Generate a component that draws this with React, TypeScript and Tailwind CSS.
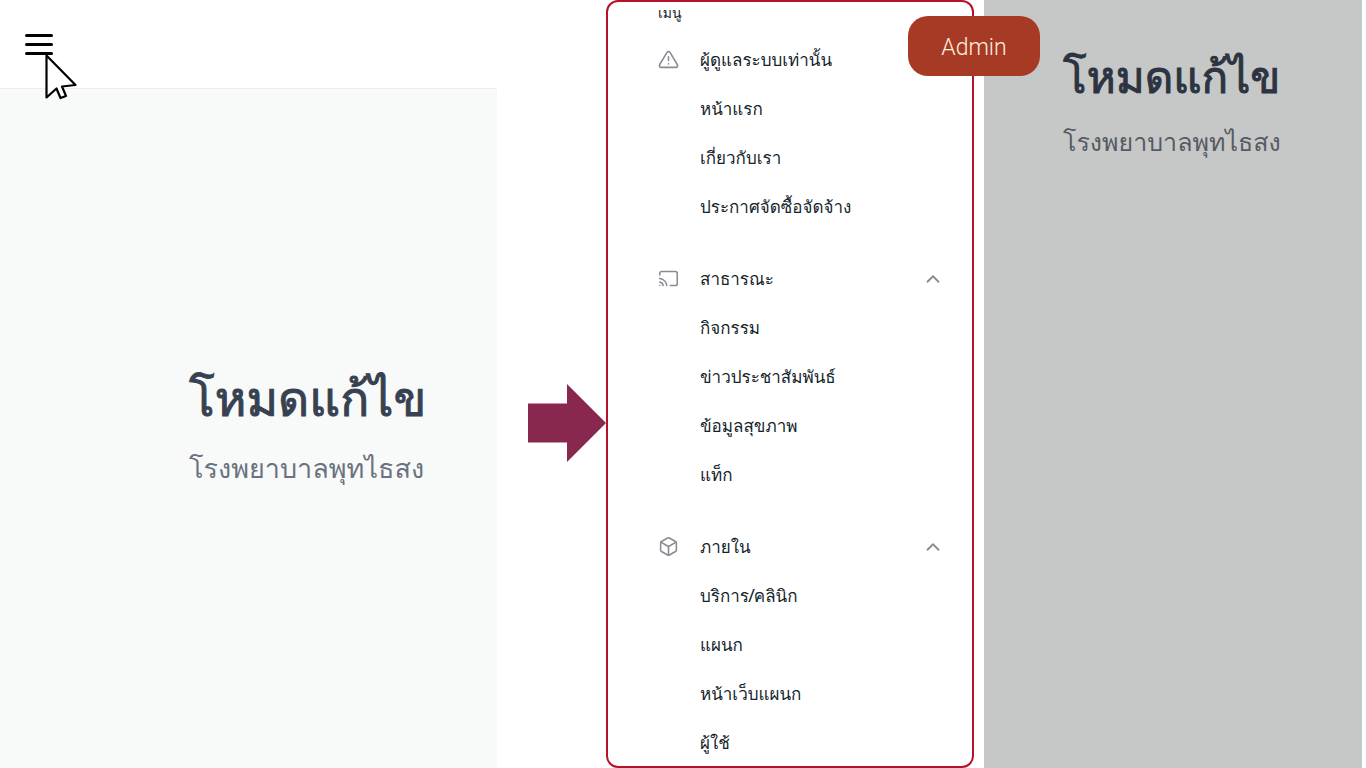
import { FiAlertTriangle, FiBox, FiCast, FiChevronUp } from "react-icons/fi";
import type { IconType } from "react-icons";

type Group = { title: string; icon: IconType; collapsible: boolean; items: string[] };

const groups: Group[] = [
  {
    title: "ผู้ดูแลระบบเท่านั้น",
    icon: FiAlertTriangle,
    collapsible: false,
    items: ["หน้าแรก", "เกี่ยวกับเรา", "ประกาศจัดซื้อจัดจ้าง"],
  },
  {
    title: "สาธารณะ",
    icon: FiCast,
    collapsible: true,
    items: ["กิจกรรม", "ข่าวประชาสัมพันธ์", "ข้อมูลสุขภาพ", "แท็ก"],
  },
  {
    title: "ภายใน",
    icon: FiBox,
    collapsible: true,
    items: ["บริการ/คลินิก", "แผนก", "หน้าเว็บแผนก", "ผู้ใช้"],
  },
];

function MenuGroup({ title, icon: Icon, collapsible, items }: Group) {
  const heading = (
    <>
      <Icon size={21} strokeWidth={1.8} className="shrink-0 text-[#8b8b95]" />
      <span className="grow text-left">{title}</span>
      {collapsible && <FiChevronUp size={22} strokeWidth={2} className="text-[#8b8b95]" />}
    </>
  );
  return (
    <section>
      {collapsible ? (
        <button type="button" aria-expanded="true" className="flex h-[49px] w-full items-center gap-[21px]">
          {heading}
        </button>
      ) : (
        <h3 className="flex h-[49px] items-center gap-[21px]">{heading}</h3>
      )}
      <ul className="pl-[42px]">
        {items.map((item) => (
          <li key={item}>
            <a href="#" className="flex h-[49px] items-center">
              {item}
            </a>
          </li>
        ))}
      </ul>
    </section>
  );
}

function Pointer() {
  return (
    <svg viewBox="0 0 34 48" className="absolute top-[53px] left-11 h-12 w-[34px]" aria-hidden="true">
      <path
        d="M2.5 2.5V44.5L12.5 35.5L16.5 45L22 43L18 33.5L31.5 32Z"
        fill="#fff"
        stroke="#000"
        strokeWidth="2.2"
        strokeLinejoin="round"
      />
    </svg>
  );
}

export default function App() {
  return (
    <main className="flex h-screen overflow-hidden bg-white pr-1 font-['Loma','Liberation_Sans',sans-serif]">
      <section className="relative flex w-[497px] shrink flex-col bg-[#f8faf9]">
        <header className="flex h-[89px] items-center border-b border-[#eceeed] bg-white px-6">
          <button type="button" aria-label="เมนู" className="flex flex-col gap-[6px] px-px">
            <span className="h-[3px] w-7 rounded-full bg-black" />
            <span className="h-[3px] w-7 rounded-full bg-black" />
            <span className="h-[3px] w-7 rounded-full bg-black" />
          </button>
        </header>
        <Pointer />
        <div className="flex grow flex-col justify-center pb-[6px] pl-[189px]">
          <h1 className="text-5xl leading-[72px] font-medium whitespace-nowrap text-[#374151] [-webkit-text-stroke:1px]">
            โหมดแก้ไข
          </h1>
          <p className="mt-[14px] text-[27px] leading-10 font-medium whitespace-nowrap text-[#6b7280]">
            โรงพยาบาลพุทไธสง
          </p>
        </div>
      </section>

      <div className="flex w-[109px] shrink items-center justify-end pt-[78px]">
        <svg viewBox="0 0 78 78" className="h-[78px] w-[78px]" aria-hidden="true">
          <path d="M0 19.5H39V0L78 39L39 78V58.5H0Z" fill="#89284f" />
        </svg>
      </div>

      <div className="relative w-[368px] shrink-0">
        <nav
          aria-label="เมนู"
          className="h-full overflow-hidden rounded-xl border-2 border-[#b5122b] pr-7 pl-[50px] text-[17px] text-[#14242b]"
        >
          <h2 className="h-[33px] text-sm leading-[22px]">เมนู</h2>
          <div className="flex flex-col gap-[23px]">
            {groups.map((group) => (
              <MenuGroup key={group.title} {...group} />
            ))}
          </div>
        </nav>
        <div className="absolute top-4 -right-[66px] flex h-[60px] w-[132px] items-center justify-center rounded-[20px] bg-[#a63a24] pt-1 font-['Roboto',sans-serif] text-[23px] font-light text-[#ffeedd]">
          Admin
        </div>
      </div>

      <section className="ml-[10px] grow bg-[#c6c8c7] pt-11 pl-[79px]">
        <h2 className="text-[44px] leading-[66px] font-medium whitespace-nowrap text-[#2c3441] [-webkit-text-stroke:1px]">
          โหมดแก้ไข
        </h2>
        <p className="mt-3 text-[25px] leading-10 font-medium whitespace-nowrap text-[#565b64]">โรงพยาบาลพุทไธสง</p>
      </section>
    </main>
  );
}
